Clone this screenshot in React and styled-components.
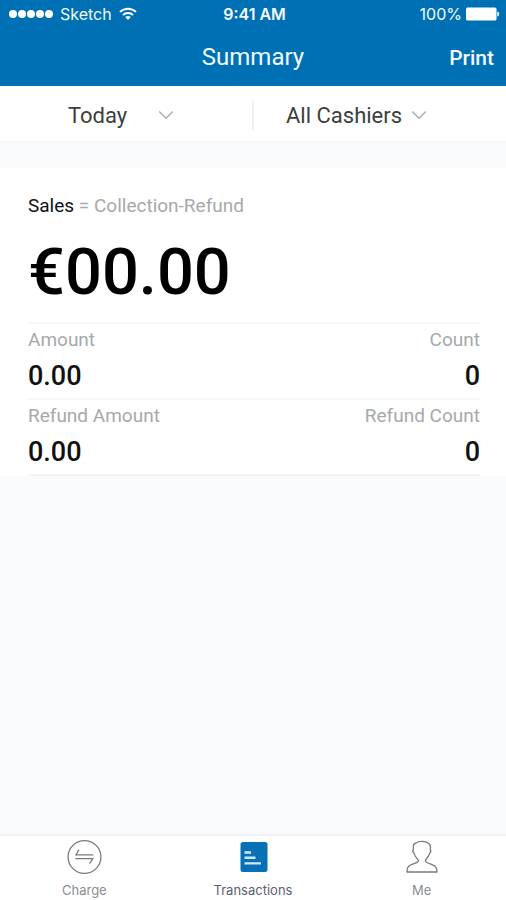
import styled, { createGlobalStyle } from "styled-components";

const stats = [
  [
    { label: "Amount", value: "0.00" },
    { label: "Count", value: "0" },
  ],
  [
    { label: "Refund Amount", value: "0.00" },
    { label: "Refund Count", value: "0" },
  ],
];

function Filter({ label, options, width }) {
  return (
    <SelectBox $width={width}>
      <select aria-label={label}>
        {options.map((option) => (
          <option key={option}>{option}</option>
        ))}
      </select>
      <svg width="16" height="10" viewBox="0 0 16 10" fill="none" stroke="#a9afb0" strokeWidth="1.4">
        <path d="M1.2 1.5 L8 8.3 L14.8 1.5" />
      </svg>
    </SelectBox>
  );
}

function WifiIcon() {
  return (
    <svg width="18" height="14" viewBox="0 0 18 14" fill="none" stroke="#fff" strokeWidth="2">
      <path d="M1 4.9 C5.5 0.6 12.5 0.6 17 4.9" />
      <path d="M4 8 C6.8 5.3 11.2 5.3 14 8" />
      <path d="M6.2 10.1 C7.8 8.6 10.2 8.6 11.8 10.1 L9 13 Z" fill="#fff" stroke="none" />
    </svg>
  );
}

function BatteryIcon() {
  return (
    <svg width="34" height="14" viewBox="0 0 34 14" fill="#fff">
      <rect x="0" y="0.5" width="30.5" height="13" rx="1.5" />
      <path d="M31.3 4.5 C33.8 5 33.8 9 31.3 9.5 Z" />
    </svg>
  );
}

function ChargeIcon() {
  return (
    <svg width="36" height="36" viewBox="0 0 36 36" fill="none" stroke="#777b7e" strokeWidth="1.3">
      <circle cx="18.5" cy="18" r="16.4" />
      <path d="M13 10.6 L10 15.8 H27.4 M9.4 19.6 H26.8 L23.6 24.6" />
    </svg>
  );
}

function TransactionsIcon() {
  return (
    <svg width="36" height="36" viewBox="0 0 36 36">
      <rect x="5.5" y="3" width="27" height="30" rx="2.5" fill="#0870b5" />
      <path d="M9.5 13.5 H16 M9.5 18.8 H20.5 M9.5 24.4 H26" stroke="#cfe6f7" strokeWidth="2.4" />
    </svg>
  );
}

function MeIcon() {
  return (
    <svg width="36" height="36" viewBox="0 0 36 36" fill="none" stroke="#777b7e" strokeWidth="1.3" strokeLinejoin="round">
      <path d="M3 33 C2.6 28.4 4.6 26.6 8 25.4 C11.5 24.2 14 23.6 14.4 22 C14.6 20.8 13.8 20.2 12.6 19 C10.8 17 10.6 16.2 10 14.2 C8.6 13 8.6 11.4 9.4 10.4 C8.8 6.2 9.4 4.4 12 4 C15 1.8 21.6 2 24.6 4.4 C27 6 26.8 8 26.2 10.6 C27.2 11.8 26.6 13.4 25.6 14.4 C25.2 16.6 24.4 17.6 23 19 C21.8 20.2 21.2 21 21.6 22.2 C22 23.8 24.4 24.4 28 25.6 C31.4 26.8 33.2 28.6 33 33 Z" />
    </svg>
  );
}

const tabs = [
  { label: "Charge", Icon: ChargeIcon },
  { label: "Transactions", Icon: TransactionsIcon, active: true },
  { label: "Me", Icon: MeIcon },
];

function App() {
  return (
    <Page>
      <GlobalStyle />
      <Header>
        <StatusBar>
          <Carrier>
            <Signal>
              <i />
              <i />
              <i />
              <i />
              <i />
            </Signal>
            Sketch
            <WifiIcon />
          </Carrier>
          <Clock>9:41 AM</Clock>
          <Battery>
            100%
            <BatteryIcon />
          </Battery>
        </StatusBar>
        <TitleBar>
          <Title>Summary</Title>
          <PrintButton type="button">Print</PrintButton>
        </TitleBar>
      </Header>

      <Filters>
        <FilterCell $indent={68}>
          <Filter label="Period" options={["Today", "Week", "Month"]} width={106} />
        </FilterCell>
        <Divider />
        <FilterCell $indent={32}>
          <Filter label="Cashier" options={["All Cashiers"]} width={141} />
        </FilterCell>
      </Filters>

      <Panel>
        <Formula>
          <strong>Sales</strong> = Collection-Refund
        </Formula>
        <Total>€00.00</Total>
        {stats.map((row) => (
          <StatRow key={row[0].label}>
            {row.map((stat) => (
              <Stat key={stat.label}>
                <dt>{stat.label}</dt>
                <dd>{stat.value}</dd>
              </Stat>
            ))}
          </StatRow>
        ))}
      </Panel>

      <TabBar>
        {tabs.map(({ label, Icon, active }) => (
          <Tab key={label} href="#" $active={active}>
            <Icon />
            {label}
          </Tab>
        ))}
      </TabBar>
    </Page>
  );
}

export default App;

const GlobalStyle = createGlobalStyle`
  * {
    box-sizing: border-box;
  }
  body {
    margin: 0;
    font-family: Roboto, sans-serif;
    background: #f8fafc;
  }
  svg {
    display: block;
    flex: none;
  }
`;

const Page = styled.div`
  display: flex;
  flex-direction: column;
  min-height: 100vh;
`;

const Header = styled.header`
  background: #0070b5;
  color: #f2f9ff;
`;

const StatusBar = styled.div`
  display: grid;
  grid-template-columns: 1fr auto 1fr;
  align-items: center;
  height: 28px;
  padding: 0 6px 0 9px;
  font-family: Inter, sans-serif;
  font-size: 16px;
`;

const Carrier = styled.div`
  display: flex;
  align-items: center;
  gap: 7px;
`;

const Signal = styled.div`
  display: flex;
  gap: 1px;

  i {
    width: 8px;
    height: 8px;
    border-radius: 50%;
    background: #fff;
  }
`;

const Clock = styled.div`
  font-weight: 600;
`;

const Battery = styled.div`
  display: flex;
  align-items: center;
  justify-content: flex-end;
  gap: 4px;
`;

const TitleBar = styled.div`
  display: grid;
  grid-template-columns: 1fr auto 1fr;
  align-items: center;
  height: 58px;
  padding: 0 12px;
`;

const Title = styled.h1`
  grid-column: 2;
  margin: 0;
  font-size: 24px;
  line-height: 56px;
  font-weight: 400;
`;

const PrintButton = styled.button`
  justify-self: end;
  padding: 2px 0 0;
  border: 0;
  background: none;
  color: inherit;
  font: 500 21px Roboto, sans-serif;
  cursor: pointer;
`;

const Filters = styled.div`
  display: grid;
  grid-template-columns: minmax(0, 1fr) auto minmax(0, 1fr);
  align-items: center;
  height: 57px;
  padding-top: 2px;
  background: #fff;
  border-bottom: 2px solid #f5f7f8;
`;

const FilterCell = styled.div`
  padding-left: ${({ $indent }) => $indent}px;
`;

const Divider = styled.div`
  width: 2px;
  height: 30px;
  background: #f1f3f4;
`;

const SelectBox = styled.div`
  display: grid;
  align-items: center;
  width: ${({ $width }) => $width}px;

  select,
  svg {
    grid-area: 1 / 1;
  }
  select {
    appearance: none;
    width: 100%;
    padding: 4px 0 2px;
    border: 0;
    background: none;
    color: #3c3e40;
    font: 400 22px Roboto, sans-serif;
  }
  svg {
    justify-self: end;
    pointer-events: none;
  }
`;

const Panel = styled.main`
  margin-top: 25px;
  padding: 26px 26px 0 28px;
  background: #fff;
`;

const Formula = styled.p`
  margin: 0;
  font-size: 19px;
  line-height: 24px;
  color: #a6a9ab;

  strong {
    font-weight: 400;
    color: #111;
  }
`;

const Total = styled.div`
  padding: 14px 0 10px;
  font-size: 65px;
  line-height: 80px;
  font-weight: 500;
  color: #000;
`;

const StatRow = styled.dl`
  display: flex;
  justify-content: space-between;
  height: 76px;
  margin: 0;
  padding-top: 4px;
  border-top: 2px solid #f4f7f8;

  &:last-child {
    height: 78px;
    border-bottom: 2px solid #f2f5f6;
  }
`;

const Stat = styled.div`
  &:last-child {
    text-align: right;
  }
  dt {
    font-size: 19px;
    line-height: 24px;
    color: #a6a9ab;
  }
  dd {
    margin: 0;
    padding-top: 8px;
    font-size: 27px;
    line-height: 32px;
    font-weight: 500;
    color: #111;
  }
`;

const TabBar = styled.nav`
  display: grid;
  grid-template-columns: repeat(3, 1fr);
  height: 66px;
  margin-top: auto;
  background: #fff;
  border-top: 2px solid #f1f3f5;
`;

const Tab = styled.a`
  display: flex;
  flex-direction: column;
  align-items: center;
  gap: 5px;
  padding-top: 3px;
  font-family: Inter, sans-serif;
  font-size: 13px;
  line-height: 20px;
  color: ${({ $active }) => ($active ? "#5c6073" : "#8b8e91")};
  text-decoration: none;
`;
